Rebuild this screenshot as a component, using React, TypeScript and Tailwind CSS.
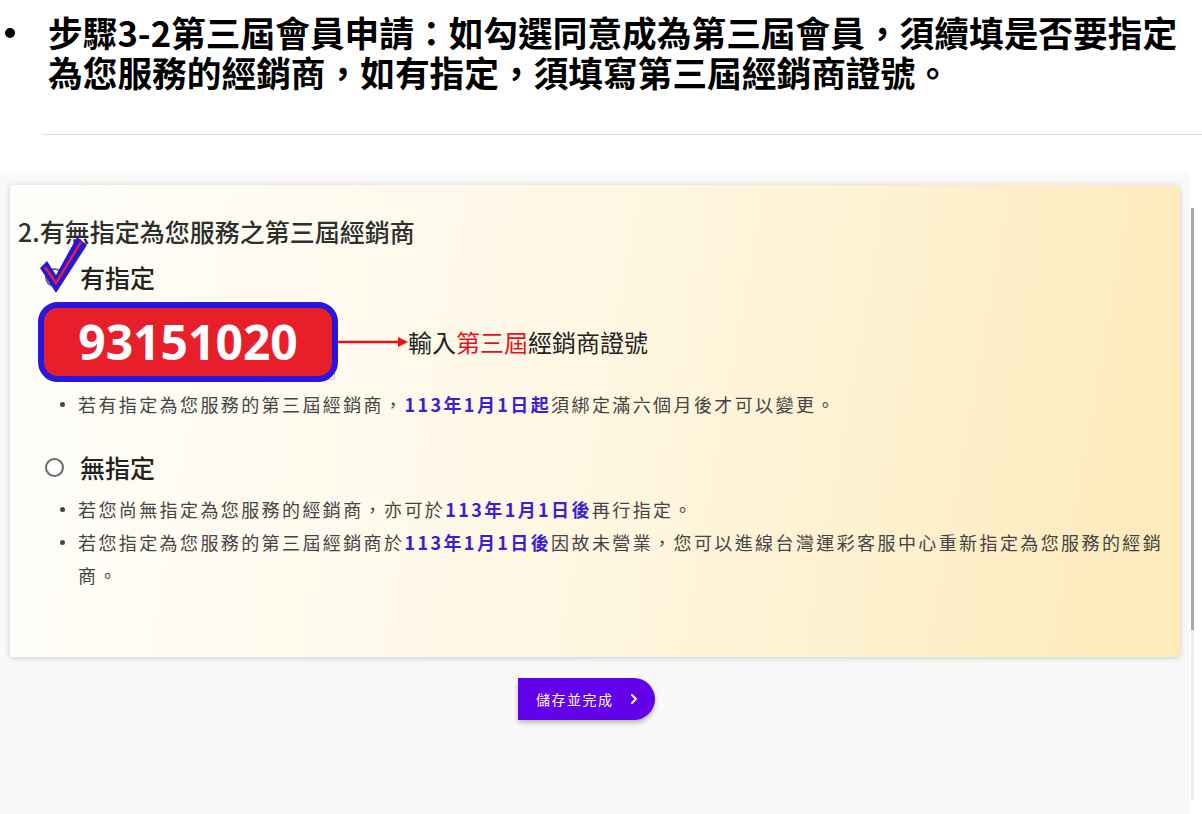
import { ChevronRight } from "lucide-react";

const cjk = "font-['Noto_Sans_CJK_TC','Noto_Sans',sans-serif]";

function Dot() {
  return <span className="mt-[14px] h-[5px] w-[5px] shrink-0 rounded-full bg-[#444]" />;
}

function Date({ children }: { children: React.ReactNode }) {
  return <b className="font-bold text-[#3b1fd6]">{children}</b>;
}

function Radio() {
  return <span className="block h-[19px] w-[19px] shrink-0 rounded-full border-2 border-[#6b6b6b] bg-white" />;
}

// hand drawn style check mark sitting over the first radio
function CheckMark() {
  return (
    <svg className="absolute left-[-7px] top-[-33px]" width="52" height="60" viewBox="0 0 52 60">
      <polygon points="2,33 9,26 18,40 39,2 49,10 18,58" fill="#2318d8" />
      <polyline points="7,32 18,48 43,7" fill="none" stroke="#e8203a" strokeWidth="2.4" />
    </svg>
  );
}

export default function App() {
  return (
    <div className={`w-[1202px] h-[814px] overflow-hidden bg-white ${cjk}`}>
      <div className="flex pt-[12px]">
        <span className="ml-[5px] mr-[33px] mt-[16px] block h-[10px] w-[10px] shrink-0 rounded-full bg-black" />
        <h1 className="text-[34.7px] font-bold leading-[40px] text-black">
          步驟3-2第三屆會員申請：如勾選同意成為第三屆會員，須續填是否要指定
          <br />
          為您服務的經銷商，如有指定，須填寫第三屆經銷商證號。
        </h1>
      </div>

      <div className="ml-[43px] mt-[42px] h-px bg-[#dedede]" />

      <div className="mt-[37px] flex h-[700px]">
        <div className="w-[1190px] bg-[#f9f9fa] pl-[10px] pr-[10px] pt-[13px]">
          <div className="h-[472px] rounded-[4px] bg-[linear-gradient(100deg,#fffefb_0%,#fff8e6_45%,#fdeab9_100%)] pl-[8px] pt-[30px] shadow-[0_1px_6px_rgba(0,0,0,0.18)]">
            <h2 className="text-[25px] font-medium leading-[32px] text-[#2e2e2e]">
              2.有無指定為您服務之第三屆經銷商
            </h2>

            <div className="mt-[14px] flex items-center gap-[16px] pl-[27px]">
              <span className="relative block">
                <Radio />
                <CheckMark />
              </span>
              <span className="text-[25px] font-medium leading-[32px] text-[#222]">有指定</span>
            </div>

            <div className="relative ml-[27px] mt-[49px] h-[38px] w-[290px] rounded-[3px] border border-[#c4c4c4] bg-white">
              <div className="absolute left-[-8px] top-[-41px] flex items-center">
                <div className="flex h-[80px] w-[300px] items-center justify-center rounded-[20px] border-[6px] border-[#2a17dc] bg-[#e81e2b] font-['Noto_Sans',sans-serif] text-[48px] font-bold text-white">
                  93151020
                </div>
                <svg width="70" height="12" viewBox="0 0 70 12">
                  <line x1="0" y1="6" x2="62" y2="6" stroke="#e8101a" strokeWidth="2.5" />
                  <polygon points="60,1 70,6 60,11" fill="#e8101a" />
                </svg>
                <span className="whitespace-nowrap text-[24px] leading-[32px] text-[#222]">
                  輸入<span className="text-[#e8101a]">第三屆</span>經銷商證號
                </span>
              </div>
            </div>

            <ul className="mt-[8px] pl-[42px] text-[18px] leading-[33px] tracking-[2.4px] text-[#444]">
              <li className="flex gap-[13px]">
                <Dot />
                <span>
                  若有指定為您服務的第三屆經銷商，<Date>113年1月1日起</Date>須綁定滿六個月後才可以變更。
                </span>
              </li>
            </ul>

            <div className="mt-[30px] flex items-center gap-[16px] pl-[27px]">
              <Radio />
              <span className="text-[25px] font-medium leading-[32px] text-[#222]">無指定</span>
            </div>

            <ul className="mt-[10px] w-[1150px] pl-[42px] text-[18px] leading-[33px] tracking-[2.4px] text-[#444]">
              <li className="flex gap-[13px]">
                <Dot />
                <span>
                  若您尚無指定為您服務的經銷商，亦可於<Date>113年1月1日後</Date>再行指定。
                </span>
              </li>
              <li className="flex gap-[13px]">
                <Dot />
                <span>
                  若您指定為您服務的第三屆經銷商於<Date>113年1月1日後</Date>因故未營業，您可以進線台灣運彩客服中心重新指定為您服務的經銷商。
                </span>
              </li>
            </ul>
          </div>

          <div className="mt-[21px] pl-[508px]">
            <button className="flex h-[42px] w-[137px] items-center gap-[12px] rounded-r-full bg-[#6200ea] pl-[18px] text-[14px] tracking-[1.5px] text-white shadow-[0_3px_5px_rgba(0,0,0,0.25)]">
              儲存並完成
              <ChevronRight size={16} strokeWidth={3} />
            </button>
          </div>
        </div>

        <div className="flex w-[12px] flex-col bg-white pt-[36px]">
          <div className="ml-[1px] h-[422px] w-[3px] bg-[#a8a8a8]" />
          <div className="ml-[1px] h-[170px] w-[3px] bg-[#ececec]" />
        </div>
      </div>
    </div>
  );
}
